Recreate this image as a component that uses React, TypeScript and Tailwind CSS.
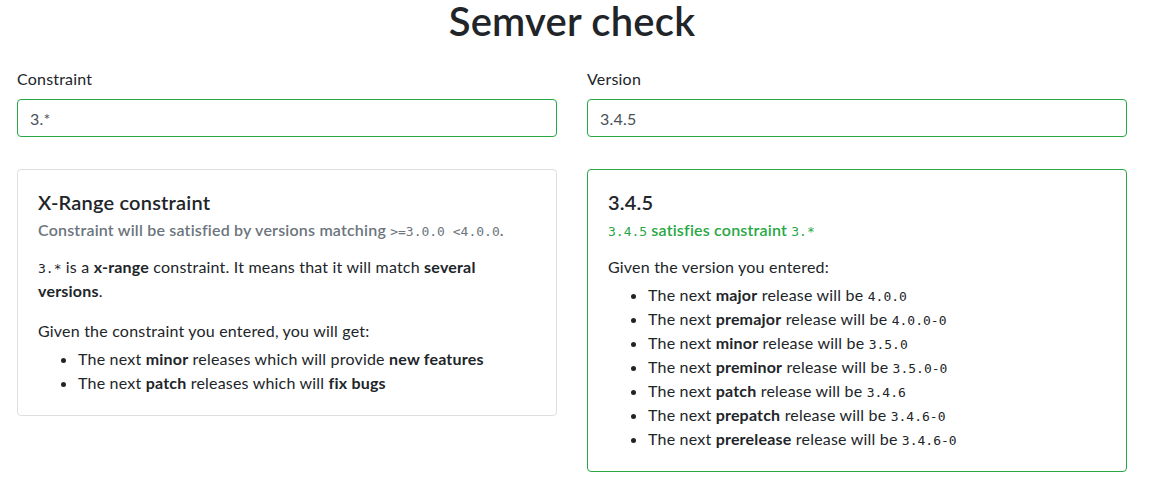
const SANS = "font-['Lato',sans-serif] tracking-[0.2px]";

function Code({ children }: { children: React.ReactNode }) {
  return (
    <code className="font-['DejaVu_Sans_Mono',monospace] text-[13px] font-normal tracking-normal leading-none">
      {children}
    </code>
  );
}

const NEXT = [
  ["major", "4.0.0"],
  ["premajor", "4.0.0-0"],
  ["minor", "3.5.0"],
  ["preminor", "3.5.0-0"],
  ["patch", "3.4.6"],
  ["prepatch", "3.4.6-0"],
  ["prerelease", "3.4.6-0"],
];

export default function App() {
  return (
    <div className={`${SANS} min-h-screen bg-white text-[#212529] text-[16px] leading-6`}>
      <div className="w-[1110px] ml-[17px]">
        <h1 className="text-center text-[40px] font-semibold leading-[42px]">Semver check</h1>

        <div className="grid grid-cols-2 gap-[30px] mt-[25px]">
          <div>
            <label className="block mb-2">Constraint</label>
            <input
              defaultValue="3.*"
              className="w-full h-[38px] px-3 rounded border border-[#28a745] text-[#495057] outline-none"
            />
          </div>
          <div>
            <label className="block mb-2">Version</label>
            <input
              defaultValue="3.4.5"
              className="w-full h-[38px] px-3 rounded border border-[#28a745] text-[#495057] outline-none"
            />
          </div>
        </div>

        <div className="grid grid-cols-2 gap-[30px] mt-[32px] items-start">
          <div className="rounded border border-black/[.125] p-5">
            <h5 className="text-[20px] font-semibold leading-6 mb-[6px]">X-Range constraint</h5>
            <h6 className="font-semibold text-[#6c757d] leading-[19px] mb-4">
              Constraint will be satisfied by versions matching <Code>&gt;=3.0.0 &lt;4.0.0</Code>.
            </h6>
            <p className="mb-4">
              <Code>3.*</Code> is a <b>x-range</b> constraint. It means that it will match <b>several versions</b>.
            </p>
            <p className="mb-1">Given the constraint you entered, you will get:</p>
            <ul className="list-disc pl-10">
              <li>
                The next <b>minor</b> releases which will provide <b>new features</b>
              </li>
              <li>
                The next <b>patch</b> releases which will <b>fix bugs</b>
              </li>
            </ul>
          </div>

          <div className="rounded border border-[#28a745] p-5">
            <h5 className="text-[20px] font-semibold leading-6 mb-[6px]">3.4.5</h5>
            <h6 className="font-semibold text-[#28a745] leading-[19px] mb-4">
              <Code>3.4.5</Code> satisfies constraint <Code>3.*</Code>
            </h6>
            <p className="mb-1">Given the version you entered:</p>
            <ul className="list-disc pl-10">
              {NEXT.map(([kind, v]) => (
                <li key={kind}>
                  The next <b>{kind}</b> release will be <Code>{v}</Code>
                </li>
              ))}
            </ul>
          </div>
        </div>
      </div>
    </div>
  );
}
